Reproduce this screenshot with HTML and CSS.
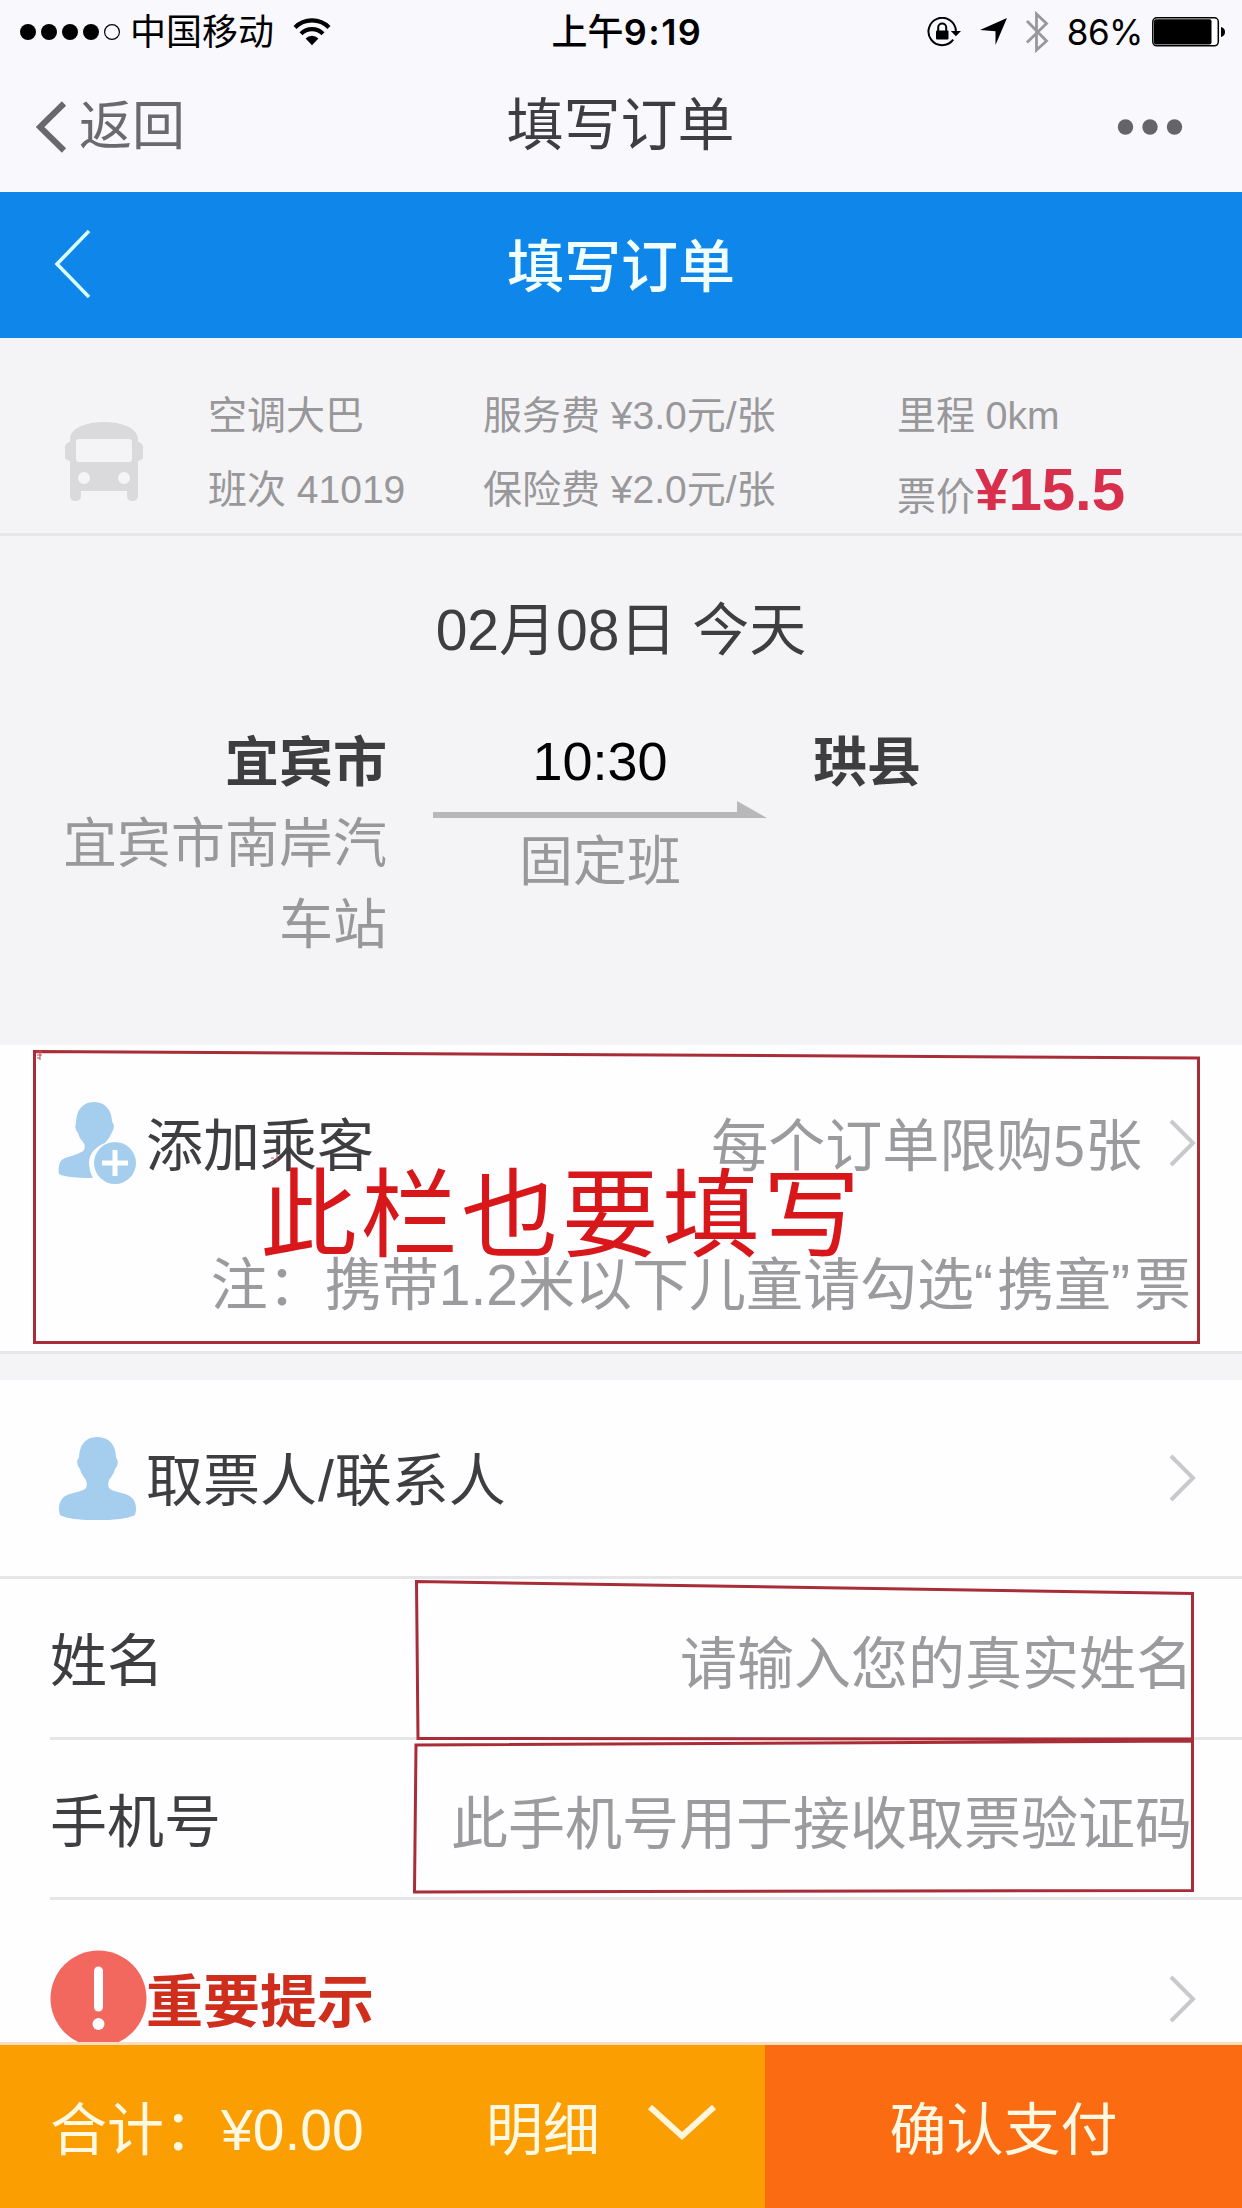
FILE: index.html
```html
<!DOCTYPE html>
<html lang="zh-CN">
<head>
<meta charset="utf-8">
<title>填写订单</title>
<link rel="stylesheet" href="styles.css">
</head>
<body>
<div class="screen">
  <header class="top">
    <div class="status">
      <div class="status-left">
        <svg class="signal" width="95" height="20" viewBox="0 0 95 20"><g><circle cx="9" cy="10" r="8"/><circle cx="30" cy="10" r="8"/><circle cx="51" cy="10" r="8"/><circle cx="72" cy="10" r="8"/></g><circle cx="93" cy="10" r="7.4" fill="none" stroke="#000" stroke-width="1.2"/></svg>
        <span class="carrier">中国移动</span>
        <svg class="wifi" width="38" height="28" viewBox="0 0 38 28"><g fill="none" stroke="#000" stroke-width="4.2"><path d="M2 9.5a24 24 0 0 1 34 0"/><path d="M8 15.8a15.5 15.5 0 0 1 22 0"/></g><path d="M12.6 20.5a9 9 0 0 1 12.8 0L19 27.3z"/></svg>
      </div>
      <div class="clock">上午<b>9:19</b></div>
      <div class="status-right">
        <svg width="34" height="30" viewBox="0 0 34 30"><path d="M26.2 22.7A13.7 13.7 0 1 1 28.9 14" fill="none" stroke="#000" stroke-width="2"/><path d="M23.8 14h10.2l-5.1 5.3z"/><rect x="9" y="13.5" width="12.500" height="9" rx="1"/><path d="M11.200 14v-3.500a4 4 0 0 1 8 0V14" fill="none" stroke="#000" stroke-width="2"/></svg>
        <svg class="locate" width="27" height="27" viewBox="0 0 27 27"><path d="M27 0 15.500 27V13.200L0 12z"/></svg>
        <svg class="bt" width="24" height="42" viewBox="0 0 24 42"><path d="M2 10 21.500 30 11.500 39V3L21.500 12.500 2 31.500" fill="none" stroke="#98979c" stroke-width="2.800"/></svg>
        <span class="percent">86%</span>
        <svg width="75" height="30" viewBox="0 0 75 30"><rect x=".8" y=".8" width="65.500" height="28" rx="4" fill="#fff" stroke="#000" stroke-width="1.500"/><rect x="2" y="2.200" width="57.500" height="25.200" rx="2"/><path d="M69 10q4 1 4 5t-4 5z"/></svg>
      </div>
    </div>
    <div class="wx-nav">
      <div class="wx-back"><svg width="32" height="52" viewBox="0 0 32 52"><path d="M28 2.500 4 26l24 23.500" fill="none" stroke="#69686b" stroke-width="6"/></svg><span>返回</span></div>
      <h1>填写订单</h1>
      <svg class="more" width="66" height="18" viewBox="0 0 66 18"><circle cx="8.500" cy="9" r="7.700"/><circle cx="33" cy="9" r="7.700"/><circle cx="57.500" cy="9" r="7.700"/></svg>
    </div>
  </header>

  <nav class="app-bar">
    <svg width="38" height="70" viewBox="0 0 38 70"><path d="M35 2 3 35l32 33" fill="none" stroke="#d9ffff" stroke-width="3.600"/></svg>
    <h2>填写订单</h2>
  </nav>

  <section class="coach">
    <svg class="bus" width="80" height="80" viewBox="0 0 80 80"><path fill="#dad9dc" fill-rule="evenodd" d="M6 16C8 4 26 0 40 0s32 4 34 16v4q5 1 5 6v9q0 3-5 4v34q0 6-5.500 6T63 73v-4H17v4q0 6-5.500 6T6 73V39q-5-1-5-4v-9q0-5 5-6zM15 17q-3 0-3 3v17q0 3 3 3h50q3 0 3-3V20q0-3-3-3zM20 50a6 6 0 1 0 .01 0zM60 50a6 6 0 1 0 .01 0z"/></svg>
    <div class="coach-col"><p>空调大巴</p><p>班次 41019</p></div>
    <div class="coach-col"><p>服务费 ¥3.0元/张</p><p>保险费 ¥2.0元/张</p></div>
    <div class="coach-col"><p>里程 0km</p><p class="fare">票价<strong>¥15.5</strong></p></div>
  </section>

  <section class="trip">
    <p class="date">02月08日 今天</p>
    <div class="route">
      <div class="from"><h3>宜宾市</h3><p>宜宾市南岸汽车站</p></div>
      <div class="middle">
        <time>10:30</time>
        <svg width="334" height="17" viewBox="0 0 334 17"><path d="M0 11h304V0l30 17H0z" fill="#b8b7b9"/></svg>
        <p>固定班</p>
      </div>
      <div class="to"><h3>珙县</h3></div>
    </div>
  </section>

  <section class="passengers">
    <div class="line">
      <svg class="person" width="79" height="83" viewBox="0 0 79 83"><path fill="#a5cdee" d="M36 0c12 0 18 9 18 20 3 2 2 8-.5 11-2 5-5 8-6.500 10Q32 47 31 60q0 9 4 16Q8 76 1 72-1 59 7 56q17-5 19-8 2-5-1-8-4-4-5-9-4-4-2-10C18 9 24 0 36 0z"/><circle cx="57" cy="61" r="21" fill="#a5cdee"/><path d="M57 48v26M44 61h26" stroke="#fff" stroke-width="5"/></svg>
      <span class="label">添加乘客</span>
      <span class="hint">每个订单限购5张</span>
      <svg class="chev" width="28" height="48" viewBox="0 0 28 48"><path d="M2 2l22 22L2 46"/></svg>
    </div>
    <p class="note">注：携带1.2米以下儿童请勾选<span class="quote">“</span>携童<span class="quote">”</span>票</p>
  </section>

  <section class="contact">
    <div class="line head">
      <svg class="person" width="79" height="83" viewBox="0 0 79 83"><path fill="#a5cdee" d="M39 0c13 0 19 9 19 21 3 2 2 8-1 11-1 5-4 8-6 11-1 4-1 6 0 8 4 5 19 4 24 11 3 4 4 10 2 16-12 7-64 7-75 0-2-6-1-12 2-16 5-7 20-6 24-11 1-2 1-4 0-8-2-3-5-6-6-11-3-3-4-9-1-11C21 9 27 0 39 0z"/></svg>
      <span class="label">取票人<span class="slash">/</span>联系人</span>
      <svg class="chev" width="28" height="48" viewBox="0 0 28 48"><path d="M2 2l22 22L2 46"/></svg>
    </div>
    <div class="field"><span class="label">姓名</span><span class="hint">请输入您的真实姓名</span></div>
    <div class="field"><span class="label">手机号</span><span class="hint">此手机号用于接收取票验证码</span></div>
    <div class="line tips">
      <svg class="alert" width="97" height="97" viewBox="0 0 97 97"><circle cx="48.500" cy="48.500" r="48" fill="#f2685f"/><path d="M48.500 21v36" stroke="#fff" stroke-width="9" stroke-linecap="round"/><circle cx="48.500" cy="74" r="6" fill="#fff"/></svg>
      <span class="label">重要提示</span>
      <svg class="chev" width="28" height="48" viewBox="0 0 28 48"><path d="M2 2l22 22L2 46"/></svg>
    </div>
  </section>

  <footer class="pay">
    <div class="sum"><span class="total">合计：¥0.00</span><span>明细</span><svg width="68" height="36" viewBox="0 0 68 36"><path d="M2 3l32 29L66 3" fill="none" stroke="#fff6dc" stroke-width="6"/></svg></div>
    <div class="submit"><span>确认支付</span></div>
  </footer>

  <svg class="marks" width="1242" height="2208" viewBox="0 0 1242 2208"><path d="M34.500 1051.500 1198.500 1058V1342.500H34.500zM416.500 1581.500 1192.500 1593.500V1739L418 1738.500zM416 1745 1192.500 1741V1890.500L414.500 1892z"/><path class="speck" d="M36 1052h6M40 1050v10M37 1055h5M37 1058h3M271 1158h3M273 1162l-3 3M277 1155v6"/></svg>
  <p class="callout">此栏也要填写</p>
</div>
</body>
</html>
```
FILE: styles.css
```css
* { box-sizing: border-box; margin: 0; padding: 0; }
body { background: #fefdff; font-family: "Liberation Sans", "Noto Sans CJK SC", sans-serif; color: #3e3d40; }
svg { display: block; flex: none; }
.screen { position: relative; width: 1242px; height: 2208px; overflow: hidden; display: flex; flex-direction: column; font-size: 57px; line-height: 80px; white-space: nowrap; }

.top { height: 192px; background: #f9f8fc; flex: none; }
.status { display: grid; grid-template-columns: 1fr auto 1fr; height: 60px; align-items: center; padding: 0 15px 0 19px; color: #000; font-size: 36px; line-height: 60px; }
.status-left, .status-right { display: flex; align-items: center; }
.status-right { justify-content: flex-end; }
.signal { overflow: visible; }
.carrier { margin-left: 16px; padding-top: 2px; }
.wifi { margin-left: 19px; }
.clock { font-weight: 500; padding-top: 2px; margin-left: 8px; }
.clock b { font: 600 36px/60px Inter, sans-serif; letter-spacing: 1.5px; }
.locate { margin-left: 19px; }
.bt { margin-left: 18px; }
.percent { margin-left: 18px; margin-right: 9px; font: 400 35px/60px Inter, sans-serif; letter-spacing: -.5px; }

.wx-nav { display: grid; grid-template-columns: 1fr auto 1fr; align-items: center; height: 132px; padding: 0 59px 0 36px; }
.wx-nav h1, .app-bar h2 { font-size: 57px; line-height: 80px; font-weight: 400; }
.wx-nav h1 { padding-bottom: 3px; margin-left: 22px; }
.wx-back { display: flex; align-items: center; gap: 11px; color: #6a696c; font-size: 53px; margin-right: -22px; padding-top: 1px; }
.more { justify-self: end; fill: #656468; margin-top: 1px; }

.app-bar { display: grid; grid-template-columns: 1fr auto 1fr; align-items: center; height: 146px; flex: none; background: #0f86ea; padding: 0 54px; color: #f2ffff; }
.app-bar svg { margin-top: -2px; }
.app-bar h2 { font-weight: 500; padding-top: 4px; }

.coach { display: grid; grid-template-columns: 144px 275px 414px 1fr; height: 198px; flex: none; background: #f4f3f6; padding: 41px 0 0 64px; border-bottom: 3px solid #e6e5e8; color: #989799; font-size: 39px; line-height: 74px; }
.bus { margin-top: 43px; }
.fare { padding-top: 1px; line-height: 72px; }
.fare strong { color: #d8304c; font-size: 60px; }

.trip { height: 509px; flex: none; background: #f4f3f6; padding-top: 54px; }
.date { text-align: center; line-height: 80px; }
.route { display: grid; grid-template-columns: 387px 426px 1fr; font-size: 54px; line-height: 81px; margin-top: 53px; }
.route h3 { font-size: 54px; font-weight: 700; }
.from { text-align: right; padding-left: 60px; white-space: normal; }
.from p, .middle p { color: #989799; }
.middle { display: flex; flex-direction: column; align-items: center; color: #000; }
.middle time { margin-top: -2px; }
.middle svg { margin-top: -1px; }
.middle p { margin-top: 4px; }

.label { color: #3e3d40; padding-top: 6px; }
.hint, .note { color: #9b9a9c; }
.hint { margin-left: auto; padding-top: 6px; }
.line { display: flex; align-items: center; padding: 0 45px 0 58px; }
.line .label { margin-left: 9px; }
.slash { margin: 0 1px; }
.chev { margin-left: auto; fill: none; stroke: #c9c8cb; stroke-width: 4; }
.hint + .chev { margin-left: 27px; }
.passengers { height: 309px; flex: none; padding-top: 56px; border-bottom: 3px solid #e6e5e7; }
.passengers .line { height: 84px; }
.note { text-align: right; padding-right: 51px; margin-top: 60px; }
.quote { letter-spacing: 4px; }
.contact { border-top: 26px solid #f4f3f6; flex: 1; overflow: hidden; min-height: 0; }
.head { height: 199px; border-bottom: 3px solid #e6e5e8; }
.field { display: flex; align-items: center; height: 161px; margin-left: 50px; padding-right: 49px; border-bottom: 3px solid #e6e5e8; }
.field .hint { padding-top: 11px; }
.field + .field { height: 160px; }
.field + .field .hint { padding-top: 10px; padding-right: 1px; }
.tips { height: 197px; padding-left: 50px; }
.tips .label { margin-left: -1px; color: #cf2e1d; font-weight: 700; }

.pay { display: grid; grid-template-columns: 765px 1fr; height: 166px; flex: none; border-top: 3px solid #f7dfbd; color: #fff9e4; }
.sum { background: #fa9e02; display: flex; align-items: center; padding-left: 50px; }
.pay span { padding-top: 6px; }
.total { width: 436px; }
.sum svg { margin-left: 48px; margin-bottom: 10px; }
.submit { background: #fb6b11; display: flex; align-items: center; justify-content: center; }

/* hand-drawn annotations over the form */
.marks { position: absolute; inset: 0; fill: none; stroke: #a92d36; stroke-width: 3; }
.speck { stroke: #c84a52; stroke-width: 1; }
.callout { position: absolute; left: 260px; top: 1146px; font-size: 97px; letter-spacing: 3.6px; line-height: 140px; color: #d8171b; }
```
